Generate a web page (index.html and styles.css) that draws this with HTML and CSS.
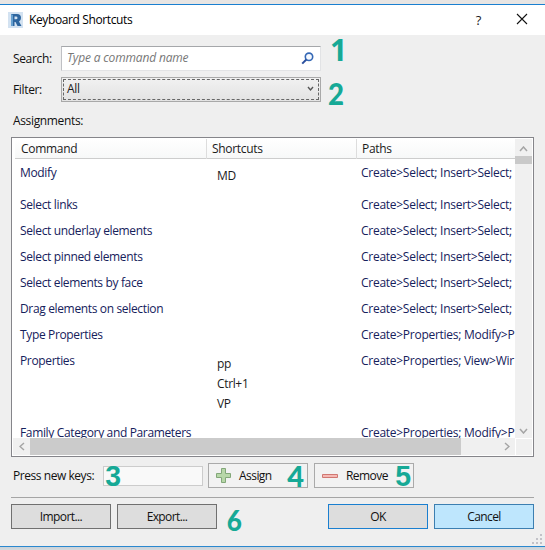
FILE: index.html
```html
<!DOCTYPE html>
<html lang="en">
<head>
<meta charset="utf-8">
<title>Keyboard Shortcuts</title>
<link rel="stylesheet" href="styles.css">
</head>
<body>
<div class="dialog">
  <header class="titlebar">
    <svg class="logo" width="15" height="16" viewBox="0 0 15 16"><rect width="15" height="16" fill="#d3e2f1"/><path d="M3 2h6q4 0 4 4 0 2.500-2 3.500L13.500 14H9.500L7.500 10H6.500v4H3z" fill="#2d659f"/><path d="M6.500 4.500H8q1.500 0 1.500 1.400T8 7.300H6.500z" fill="#d3e2f1"/><path d="M3 2l2 1v11H3z" fill="#66a0d0"/></svg>
    <h1 class="title">Keyboard Shortcuts</h1>
    <span class="help">?</span>
    <svg class="close" width="12" height="12" viewBox="0 0 12 12"><path d="M1 1l10 10M11 1L1 11" stroke="#111" stroke-width="1.100"/></svg>
  </header>
  <main class="body">
    <div class="field search-row">
      <label>Search:</label>
      <div class="search"><span class="hint">Type a command name</span>
        <svg width="13" height="13" viewBox="0 0 13 13"><circle cx="8" cy="4.800" r="3.700" fill="#f5f9ff" stroke="#3568b5" stroke-width="1.600"/><path d="M5.400 7.500L1.200 11.600" stroke="#2b4f9e" stroke-width="2"/></svg>
      </div>
      <b class="num n1">1</b>
    </div>
    <div class="field filter-row">
      <label>Filter:</label>
      <div class="select"><div class="focus"><span>All</span>
        <svg width="7" height="6" viewBox="0 0 7 6"><path d="M1 1l2.500 3L6 1" fill="none" stroke="#555" stroke-width="1.400"/></svg></div>
      </div>
      <b class="num n2">2</b>
    </div>
    <div class="assign-label">Assignments:</div>
    <section class="list">
      <div class="view">
        <div class="row head"><span>Command</span><span>Shortcuts</span><span>Paths</span></div>
        <div class="row tall"><span>Modify</span><div class="keys"><span>MD</span></div><span class="path">Create&gt;Select; Insert&gt;Select;</span></div>
        <div class="row"><span>Select links</span><div></div><span class="path">Create&gt;Select; Insert&gt;Select;</span></div>
        <div class="row"><span>Select underlay elements</span><div></div><span class="path">Create&gt;Select; Insert&gt;Select;</span></div>
        <div class="row"><span>Select pinned elements</span><div></div><span class="path">Create&gt;Select; Insert&gt;Select;</span></div>
        <div class="row"><span>Select elements by face</span><div></div><span class="path">Create&gt;Select; Insert&gt;Select;</span></div>
        <div class="row"><span>Drag elements on selection</span><div></div><span class="path">Create&gt;Select; Insert&gt;Select;</span></div>
        <div class="row"><span>Type Properties</span><div></div><span class="path">Create&gt;Properties; Modify&gt;P</span></div>
        <div class="row multi"><span>Properties</span><div class="keys"><span>pp</span><span>Ctrl+1</span><span>VP</span></div><span class="path">Create&gt;Properties; View&gt;Wir</span></div>
        <div class="row"><span>Family Category and Parameters</span><div></div><span class="path">Create&gt;Properties; Modify&gt;P</span></div>
      </div>
      <div class="vbar">
        <svg width="9" height="6" viewBox="0 0 9 6"><path d="M1 5l3.500-4L8 5" fill="none" stroke="#a5a5a5" stroke-width="1.500"/></svg>
        <i class="vthumb"></i>
        <svg class="down" width="9" height="6" viewBox="0 0 9 6"><path d="M1 1l3.500 4L8 1" fill="none" stroke="#a5a5a5" stroke-width="1.500"/></svg>
      </div>
      <div class="hbar">
        <svg width="6" height="9" viewBox="0 0 6 9"><path d="M5 1L1 4.500 5 8" fill="none" stroke="#a5a5a5" stroke-width="1.500"/></svg>
        <i class="hthumb"></i>
        <svg class="right" width="6" height="9" viewBox="0 0 6 9"><path d="M1 1l4 3.500L1 8" fill="none" stroke="#a5a5a5" stroke-width="1.500"/></svg>
      </div>
      <div class="corner"></div>
    </section>
    <div class="keysrow">
      <label>Press new keys:</label>
      <div class="keyinput"><b class="num n3">3</b></div>
      <button class="btn light"><svg width="15" height="15" viewBox="0 0 15 15"><path d="M5.500.5h4v5h5v4h-5v5h-4v-5h-5v-4h5z" fill="#b7d7a8" stroke="#82a779"/></svg><span>Assign</span><b class="num n4">4</b></button>
      <button class="btn light remove"><svg width="16" height="4" viewBox="0 0 16 4"><path d="M.5.5h15v3H.5z" fill="#f5b9b5" stroke="#d07771"/></svg><span>Remove</span><b class="num n5">5</b></button>
    </div>
    <footer class="actions">
      <button class="btn">Import...</button>
      <button class="btn">Export...</button>
      <b class="num n6">6</b>
      <button class="btn ok">OK</button>
      <button class="btn cancel">Cancel</button>
    </footer>
    <svg class="grip" width="11" height="11" viewBox="0 0 11 11"><path d="M8 0h2v2H8zM4 4h2v2H4zM8 4h2v2H8zM0 8h2v2H0zM4 8h2v2H4zM8 8h2v2H8z" fill="#c2c2c8"/></svg>
  </main>
</div>
</body>
</html>
```
FILE: styles.css
```css
* { box-sizing: border-box; }
body {
  margin: 0; width: 545px; height: 550px; overflow: hidden;
  background: linear-gradient(#e8e5e3 0 4px, #c9d1d8 547px, #d5dadd 550px);
  font: 12px/16px "Open Sans", "Noto Sans", sans-serif; color: #1b1b1b;
  letter-spacing: -0.35px;
}
.dialog { margin-top: 4px; height: 543px; border-top: 1px solid #1a7fd0; border-bottom: 1px solid #2a88cf; background: #efefef; }
.titlebar { display: flex; align-items: center; height: 30px; background: #fff; padding: 0 17px 0 8px; }
.logo { margin-top: -1px; }
.title { flex: 1; margin: 0 0 0 6px; font: inherit; color: #000; letter-spacing: -0.38px; }
.help { margin-right: 35px; font-size: 13px; }
.close { margin-top: -2px; }
.body { position: relative; }
.field { display: flex; align-items: center; padding-left: 13px; }
.field label { width: 48px; flex: none; color: #111; padding-top: 1px; }
.search-row { padding-top: 11px; }
.search { display: flex; align-items: center; justify-content: space-between; width: 260px; height: 25px; padding: 0 6px 1px 5px; background: #fff; border: 1px solid #e2e3e5; border-top-color: #a5a7aa; border-left-color: #bfc0c4; }
.hint { font-style: italic; color: #777; letter-spacing: -0.16px; }
.filter-row { padding-top: 6px; }
.select { width: 260px; height: 25px; padding: 1px; border: 1px solid #a9a9a9; background: linear-gradient(#f1f1f1, #e3e3e3); }
.focus { display: flex; align-items: center; justify-content: space-between; height: 21px; padding: 0 4px 2px 3px; border: 1px dashed #666; }
.num { font: bold 29px/30px "Liberation Sans", Arial, sans-serif; color: #16a996; letter-spacing: 0; }
.n1, .n2 { height: 30px; margin: -8px 0; transform-origin: left center; }
.n1 { font-family: "Open Sans", sans-serif; font-size: 30px; margin-left: 9px; transform: translateY(-9px); }
.n2 { font-family: Lato, sans-serif; font-weight: 900; font-size: 30px; margin-left: 7px; transform: translateY(3px) scaleX(.92); }
.assign-label { padding: 11px 0 0 13px; height: 35px; color: #111; }
.list { display: grid; grid-template: 299px 17px / 502px 17px; margin-left: 11px; width: 523px; height: 320px; padding: 1px; border: 1px solid #85858a; background: #fff; }
.view { overflow: hidden; color: #15215c; }
.row { display: grid; grid-template-columns: 193px 150px 159px; height: 26px; padding-top: 5px; white-space: nowrap; }
.row > :first-child { padding-left: 7px; }
.row > :last-child { padding-left: 5px; }
.head { height: 20px; margin: 0 0 1px 2px; padding: 0; grid-template-columns: 191px 150px 1fr; line-height: 20px; letter-spacing: -0.3px; border-bottom: 1px solid #cdcdcd; color: #1b1b1b; background: linear-gradient(#fff, #f7f8f8); }
.head > :first-child { padding-left: 6px; }
.head > span + span { border-left: 1px solid #ddd; padding-left: 5px; }
.tall { height: 32px; }
.multi { height: 72px; }
.keys { display: flex; flex-direction: column; gap: 4px; padding: 3px 0 0 11px; color: #1b1b1b; }
.path { overflow: hidden; letter-spacing: -0.27px; }
.vbar { display: flex; flex-direction: column; align-items: center; background: #f0f0f0; padding: 7px 0 4px; }
.vthumb { width: 17px; height: 8px; margin-top: 4px; background: #c9c9c9; }
.down { margin-top: auto; }
.hbar { display: flex; align-items: center; background: #f0f0f0; padding-left: 6px; }
.hthumb { width: 431px; height: 17px; margin-left: 5px; background: #cbcbcb; }
.right { margin-left: 43px; }
.corner { background: #f0f0f0; border: 1px solid #fff; border-width: 1px 0 0 1px; }
.keysrow { display: flex; align-items: center; height: 41px; margin: 0 11px; padding: 0 0 3px 2px; border-bottom: 1px solid #a5a5a5; }
.keysrow label { width: 90px; color: #111; padding-top: 1px; letter-spacing: -0.45px; }
.keyinput { width: 100px; height: 20px; margin-right: 5px; border: 1px solid #ccc; background: #f9f9f9; display: flex; align-items: center; padding-left: 1px; }
.btn { display: flex; align-items: center; justify-content: center; width: 100px; height: 25px; padding: 0; border: 1px solid #707070; border-radius: 0; background: #ddd; color: #111; font: inherit; letter-spacing: -0.6px; }
.light { justify-content: flex-start; border-color: #aaa; background: #f2f2f2; padding-left: 7px; letter-spacing: -0.55px; }
.light span { margin-left: 8px; }
.remove { margin-left: 6px; }
.light .num { margin-left: auto; }
.n3, .n5 { transform: scaleX(.98); }
.light .n4 { font-family: Lato, sans-serif; font-weight: 900; margin-right: 3px; }
.light .n5 { margin-right: 2px; }
.actions { display: flex; align-items: center; margin: 6px 11px 0; }
.actions .btn + .btn { margin-left: 6px; }
.n6 { font-family: Lato, sans-serif; font-weight: 900; margin: -8px 0 -8px 9px; transform: translateY(3px) scaleX(.9); }
.actions .ok { margin-left: auto; border-color: #1a7fd0; }
.cancel { background: #bee6fd; border-color: #3c7fb1; }
.grip { position: absolute; right: 2px; bottom: -16px; }
```
